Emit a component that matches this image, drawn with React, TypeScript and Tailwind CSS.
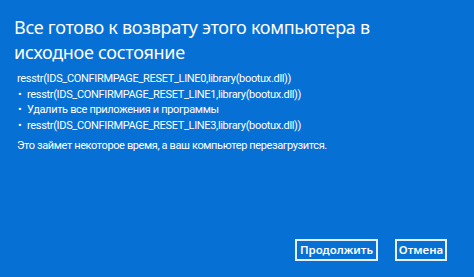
import React from 'react';

const lines = [
  { bullet: false, text: 'resstr(IDS_CONFIRMPAGE_RESET_LINE0,library(bootux.dll))' },
  { bullet: true, text: 'resstr(IDS_CONFIRMPAGE_RESET_LINE1,library(bootux.dll))' },
  { bullet: true, text: 'Удалить все приложения и программы' },
  { bullet: true, text: 'resstr(IDS_CONFIRMPAGE_RESET_LINE3,library(bootux.dll))' },
];

export default function App() {
  return (
    <div
      className="w-[474px] h-[277px] bg-[#0670d4] text-white flex flex-col overflow-hidden"
      style={{ fontFamily: '"Noto Sans", "Open Sans", sans-serif' }}
    >
      <h1 className="pl-[14px] pt-[15px] w-[400px] text-[18px] leading-[25px] font-normal tracking-[-0.3px]">
        Все готово к возврату этого компьютера в исходное состояние
      </h1>

      <div
        className="pl-[17px] mt-[6px] text-[11px] leading-[15.5px] tracking-[-0.33px]"
        style={{ fontFamily: 'Roboto, "Noto Sans", sans-serif' }}
      >
        {lines.map((l, i) => (
          <div key={i} className="flex h-[15.5px]">
            {l.bullet && <span className="w-[10px] pl-[1px] shrink-0 tracking-normal">•</span>}
            <span>{l.text}</span>
          </div>
        ))}
      </div>

      <p
        className="pl-[17px] mt-[5px] text-[11px] leading-[15px] tracking-[-0.38px]"
        style={{ fontFamily: 'Roboto, "Noto Sans", sans-serif' }}
      >
        Это займет некоторое время, а ваш компьютер перезагрузится.
      </p>

      <div className="mt-auto mb-[16px] mr-[27px] flex justify-end gap-[17px]">
        <button className="w-[83px] h-[22px] border-2 border-[#e6f0fb] text-[11.5px] font-semibold flex items-center justify-center">
          Продолжить
        </button>
        <button className="w-[52px] h-[22px] border-2 border-[#e6f0fb] text-[11.5px] font-semibold flex items-center justify-center">
          Отмена
        </button>
      </div>
    </div>
  );
}
